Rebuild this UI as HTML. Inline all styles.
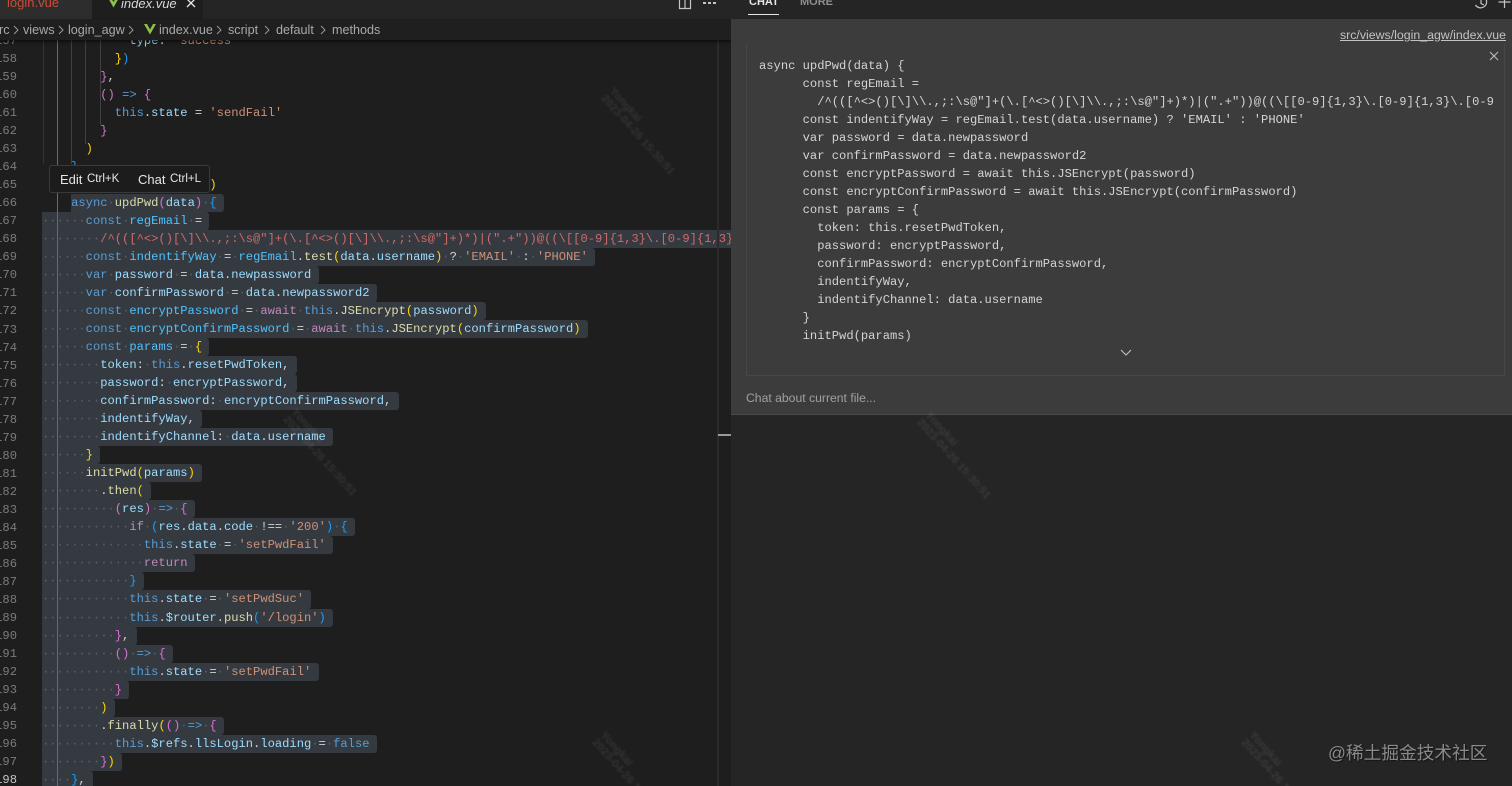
<!DOCTYPE html>
<html><head><meta charset="utf-8">
<style>
html,body{margin:0;padding:0;background:#1e1e1e;width:1512px;height:786px;overflow:hidden}
#r{position:relative;width:1512px;height:786px;overflow:hidden;background:#1e1e1e;font-family:"Liberation Sans",sans-serif}
.a{position:absolute}
#nums,#code{font:12.13px/18.03px "Liberation Mono",monospace}
#nums{left:-5px;top:32px;color:#7b7b7b;width:22px;text-align:right;white-space:pre}
#nums b{color:#c6c6c6;font-weight:400}
#code{left:42px;top:32px;width:689px;height:754px;overflow:hidden;color:#d4d4d4}
#code div{height:18.03px;white-space:pre}
#code .x{display:inline-block;height:18.03px;background:#353a40;padding-right:7.3px;border-radius:0 3px 3px 0;vertical-align:top}
i{font-style:normal;color:#5a6066}
.k{color:#569cd6}.f{color:#dcdcaa}.v{color:#9cdcfe}.c{color:#4fc1ff}.s{color:#ce9178}.r{color:#d16969}
.g{color:#ffd700}.p{color:#da70d6}.b{color:#179fff}.m{color:#c586c0}
.gd{position:absolute;width:1px;background:#404040}
#p{left:731px;top:19px;width:781px;height:396px;background:#3c3c3c}
#pc{font:12.13px/18px "Liberation Mono",monospace;white-space:pre;color:#d4d4d4;left:759px;top:57px;width:735px;height:300px;overflow:hidden}
.wm{position:absolute;transform-origin:0 0;transform:rotate(48deg);font:bold 11px/11px "Liberation Sans",sans-serif;color:rgba(255,255,255,.085);white-space:pre;filter:blur(.7px)}
.bc{position:absolute;top:6px}
</style></head><body><div id="r">

<div class="gd" style="left:43px;top:40px;height:124px;background:#333"></div>
<div class="gd" style="left:71px;top:40px;height:124px"></div>
<div class="gd" style="left:85px;top:40px;height:104px"></div>
<div class="gd" style="left:100px;top:40px;height:85px"></div>

<div id="nums" class="a">157
158
159
160
161
162
163
164
165
166
167
168
169
170
171
172
173
174
175
176
177
178
179
180
181
182
183
184
185
186
187
188
189
190
191
192
193
194
195
196
197
<b>198</b></div>

<div id="code" class="a">
<div>            <span class="v">type</span>: <span class="s">'success'</span></div>
<div>          <span class="g">}</span><span class="b">)</span></div>
<div>        <span class="p">}</span>,</div>
<div>        <span class="p">()</span> <span class="k">=&gt;</span> <span class="p">{</span></div>
<div>          <span class="k">this</span>.<span class="v">state</span> = <span class="s">'sendFail'</span></div>
<div>        <span class="p">}</span></div>
<div>      <span class="g">)</span></div>
<div>    <span class="b">}</span>,</div>
<div>                       <span class="g">)</span></div>
<div>    <span class="x"><span class="k">async</span><i>·</i><span class="f">updPwd</span><span class="p">(</span><span class="v">data</span><span class="p">)</span><i>·</i><span class="b">{</span></span></div>
<div><span class="x"><i>······</i><span class="k">const</span><i>·</i><span class="c">regEmail</span><i>·</i>=</span></div>
<div><span class="x"><i>········</i><span class="r">/^(([^&lt;&gt;()[\]\\.,;:\s@"]+(\.[^&lt;&gt;()[\]\\.,;:\s@"]+)*)|(".+"))@((\[[0-9]{1,3}\.[0-9]{1,3}\.[0-9]{1,3}\.[0-9]{1,3}\])|(([a-zA-Z\-0-9]+\.)+[a-zA-Z]{2,}))$/</span></span></div>
<div><span class="x"><i>······</i><span class="k">const</span><i>·</i><span class="c">indentifyWay</span><i>·</i>=<i>·</i><span class="c">regEmail</span>.<span class="f">test</span><span class="g">(</span><span class="v">data</span>.<span class="v">username</span><span class="g">)</span><i>·</i>?<i>·</i><span class="s">'EMAIL'</span><i>·</i>:<i>·</i><span class="s">'PHONE'</span></span></div>
<div><span class="x"><i>······</i><span class="k">var</span><i>·</i><span class="v">password</span><i>·</i>=<i>·</i><span class="v">data</span>.<span class="v">newpassword</span></span></div>
<div><span class="x"><i>······</i><span class="k">var</span><i>·</i><span class="v">confirmPassword</span><i>·</i>=<i>·</i><span class="v">data</span>.<span class="v">newpassword2</span></span></div>
<div><span class="x"><i>······</i><span class="k">const</span><i>·</i><span class="c">encryptPassword</span><i>·</i>=<i>·</i><span class="m">await</span><i>·</i><span class="k">this</span>.<span class="f">JSEncrypt</span><span class="g">(</span><span class="v">password</span><span class="g">)</span></span></div>
<div><span class="x"><i>······</i><span class="k">const</span><i>·</i><span class="c">encryptConfirmPassword</span><i>·</i>=<i>·</i><span class="m">await</span><i>·</i><span class="k">this</span>.<span class="f">JSEncrypt</span><span class="g">(</span><span class="v">confirmPassword</span><span class="g">)</span></span></div>
<div><span class="x"><i>······</i><span class="k">const</span><i>·</i><span class="c">params</span><i>·</i>=<i>·</i><span class="g">{</span></span></div>
<div><span class="x"><i>········</i><span class="v">token</span>:<i>·</i><span class="k">this</span>.<span class="v">resetPwdToken</span>,</span></div>
<div><span class="x"><i>········</i><span class="v">password</span>:<i>·</i><span class="v">encryptPassword</span>,</span></div>
<div><span class="x"><i>········</i><span class="v">confirmPassword</span>:<i>·</i><span class="v">encryptConfirmPassword</span>,</span></div>
<div><span class="x"><i>········</i><span class="v">indentifyWay</span>,</span></div>
<div><span class="x"><i>········</i><span class="v">indentifyChannel</span>:<i>·</i><span class="v">data</span>.<span class="v">username</span></span></div>
<div><span class="x"><i>······</i><span class="g">}</span></span></div>
<div><span class="x"><i>······</i><span class="f">initPwd</span><span class="g">(</span><span class="v">params</span><span class="g">)</span></span></div>
<div><span class="x"><i>········</i>.<span class="f">then</span><span class="g">(</span></span></div>
<div><span class="x"><i>··········</i><span class="p">(</span><span class="v">res</span><span class="p">)</span><i>·</i><span class="k">=&gt;</span><i>·</i><span class="p">{</span></span></div>
<div><span class="x"><i>············</i><span class="m">if</span><i>·</i><span class="b">(</span><span class="v">res</span>.<span class="v">data</span>.<span class="v">code</span><i>·</i>!==<i>·</i><span class="s">'200'</span><span class="b">)</span><i>·</i><span class="b">{</span></span></div>
<div><span class="x"><i>··············</i><span class="k">this</span>.<span class="v">state</span><i>·</i>=<i>·</i><span class="s">'setPwdFail'</span></span></div>
<div><span class="x"><i>··············</i><span class="m">return</span></span></div>
<div><span class="x"><i>············</i><span class="b">}</span></span></div>
<div><span class="x"><i>············</i><span class="k">this</span>.<span class="v">state</span><i>·</i>=<i>·</i><span class="s">'setPwdSuc'</span></span></div>
<div><span class="x"><i>············</i><span class="k">this</span>.<span class="v">$router</span>.<span class="f">push</span><span class="b">(</span><span class="s">'/login'</span><span class="b">)</span></span></div>
<div><span class="x"><i>··········</i><span class="p">}</span>,</span></div>
<div><span class="x"><i>··········</i><span class="p">()</span><i>·</i><span class="k">=&gt;</span><i>·</i><span class="p">{</span></span></div>
<div><span class="x"><i>············</i><span class="k">this</span>.<span class="v">state</span><i>·</i>=<i>·</i><span class="s">'setPwdFail'</span></span></div>
<div><span class="x"><i>··········</i><span class="p">}</span></span></div>
<div><span class="x"><i>········</i><span class="g">)</span></span></div>
<div><span class="x"><i>········</i>.<span class="f">finally</span><span class="g">(</span><span class="p">()</span><i>·</i><span class="k">=&gt;</span><i>·</i><span class="p">{</span></span></div>
<div><span class="x"><i>··········</i><span class="k">this</span>.<span class="v">$refs</span>.<span class="v">llsLogin</span>.<span class="v">loading</span><i>·</i>=<i>·</i><span class="k">false</span></span></div>
<div><span class="x"><i>········</i><span class="p">}</span><span class="g">)</span></span></div>
<div><span class="x"><i>····</i><span class="b">}</span>,</span></div>
</div>
<div class="gd" style="left:57px;top:40px;height:746px;background:#6a6a6a"></div>

<!-- scrollbar / minimap edge -->
<div class="a" style="left:717px;top:40px;width:2px;height:746px;background:#2b2b2b"></div>
<div class="a" style="left:718px;top:434px;width:13px;height:2px;background:#9a9a9a"></div>

<!-- tabs -->
<div class="a" style="left:0;top:0;width:731px;height:19px;background:#252526"></div>
<div class="a" style="left:0;top:0;width:92px;height:19px;background:#2d2d2d;overflow:hidden"><span class="a" style="left:7px;top:-5px;font-size:13px;line-height:16px;color:#c74e39;white-space:nowrap">login.vue</span></div>
<div class="a" style="left:92px;top:0;width:111px;height:19px;background:#1e1e1e;overflow:hidden">
<svg class="a" style="left:15px;top:-4px" width="13" height="12" viewBox="0 0 13 12"><path d="M0 0L6.5 11.5L13 0H10L6.5 6L3 0Z" fill="#8dc149"/></svg>
<span class="a" style="left:29px;top:-4px;font-size:13px;line-height:16px;color:#d8d8d8;font-style:italic;white-space:nowrap">index.vue</span>
<svg class="a" style="left:94px;top:-2px" width="10" height="10" viewBox="0 0 10 10"><path d="M1 1L9 9M9 1L1 9" stroke="#e8e8e8" stroke-width="1.3"/></svg>
</div>
<svg class="a" style="left:678px;top:-3px" width="14" height="13" viewBox="0 0 14 13"><path d="M1.5 0V11.5H12.5V0M7 0V11.5" fill="none" stroke="#c5c5c5" stroke-width="1.2"/></svg>
<div class="a" style="left:703px;top:2px;width:3px;height:2px;background:#c5c5c5;box-shadow:5px 0 0 #c5c5c5,10px 0 0 #c5c5c5"></div>

<!-- breadcrumb -->
<div class="a" style="left:0;top:19px;width:731px;height:21px;background:#1f1f1f;box-shadow:0 2px 3px rgba(0,0,0,.55);font-size:12.6px;line-height:23px;color:#a9a9a9;white-space:nowrap"><span class="a" style="left:-1px">rc</span><svg class="bc" style="left:13px" width="6" height="10" viewBox="0 0 6 10"><path d="M1 1L5 5L1 9" fill="none" stroke="#999" stroke-width="1"/></svg><span class="a" style="left:23px">views</span><svg class="bc" style="left:58px" width="6" height="10" viewBox="0 0 6 10"><path d="M1 1L5 5L1 9" fill="none" stroke="#999" stroke-width="1"/></svg><span class="a" style="left:68px">login_agw</span><svg class="bc" style="left:128px" width="6" height="10" viewBox="0 0 6 10"><path d="M1 1L5 5L1 9" fill="none" stroke="#999" stroke-width="1"/></svg><svg class="a" style="left:144px;top:5px" width="12" height="11" viewBox="0 0 12 11"><path d="M0 0L6 10.5L12 0H9L6 5.5L3 0Z" fill="#8dc149"/></svg><span class="a" style="left:159px">index.vue</span><svg class="bc" style="left:216px" width="6" height="10" viewBox="0 0 6 10"><path d="M1 1L5 5L1 9" fill="none" stroke="#999" stroke-width="1"/></svg><span class="a" style="left:228px">script</span><svg class="bc" style="left:264px" width="6" height="10" viewBox="0 0 6 10"><path d="M1 1L5 5L1 9" fill="none" stroke="#999" stroke-width="1"/></svg><span class="a" style="left:276px">default</span><svg class="bc" style="left:320px" width="6" height="10" viewBox="0 0 6 10"><path d="M1 1L5 5L1 9" fill="none" stroke="#999" stroke-width="1"/></svg><span class="a" style="left:332px">methods</span></div>

<!-- popup -->
<div class="a" style="left:49px;top:165px;width:161px;height:28px;background:#1c1c1c;border:1px solid #3a3a3a;border-radius:3px;box-sizing:border-box;color:#e6e6e6;white-space:nowrap;z-index:5">
<span class="a" style="left:10px;top:6px;font-size:13px;line-height:16px">Edit</span>
<span class="a" style="left:37px;top:6px;font-size:11.5px;line-height:15px">Ctrl+K</span>
<span class="a" style="left:88px;top:6px;font-size:13px;line-height:16px">Chat</span>
<span class="a" style="left:120px;top:6px;font-size:11.5px;line-height:15px">Ctrl+L</span>
</div>

<!-- right side -->
<div class="a" style="left:731px;top:0;width:781px;height:786px;background:#252526"></div>
<span class="a" style="left:749px;top:-5px;font-size:11px;line-height:14px;font-weight:bold;color:#e7e7e7">CHAT</span>
<div class="a" style="left:748px;top:14px;width:31px;height:1px;background:#e7e7e7"></div>
<span class="a" style="left:800px;top:-5px;font-size:11px;line-height:14px;font-weight:bold;color:#8f8f8f">MORE</span>
<svg class="a" style="left:1473px;top:-5px" width="16" height="16" viewBox="0 0 16 16"><path d="M3 3A6 6 0 1 1 2.5 10M8 4V8.5L11 10" fill="none" stroke="#c5c5c5" stroke-width="1.2"/></svg>
<svg class="a" style="left:1498px;top:-4px" width="13" height="13" viewBox="0 0 13 13"><path d="M6.5 0V12M0.5 6H12.5" stroke="#c5c5c5" stroke-width="1.2"/></svg>

<div id="p" class="a"></div>
<div class="a" style="left:731px;top:414px;width:781px;height:1px;background:#4a4a4a"></div>
<div class="a" style="left:746px;top:44px;width:759px;height:332px;box-sizing:border-box;border-left:1px solid #474747;border-bottom:1px solid #474747;border-right:1px solid #474747"></div>
<span class="a" style="right:6px;top:28px;font-size:12.35px;line-height:15px;color:#c2c2c2;text-decoration:underline;white-space:nowrap">src/views/login_agw/index.vue</span>
<svg class="a" style="left:1489px;top:51px" width="10" height="10" viewBox="0 0 10 10"><path d="M1 1L9 9M9 1L1 9" stroke="#bdbdbd" stroke-width="1.1"/></svg>
<div id="pc" class="a">async updPwd(data) {
      const regEmail =
        /^(([^&lt;&gt;()[\]\\.,;:\s@"]+(\.[^&lt;&gt;()[\]\\.,;:\s@"]+)*)|(".+"))@((\[[0-9]{1,3}\.[0-9]{1,3}\.[0-9]{1,3}\.[0-9]{1,3}\])
      const indentifyWay = regEmail.test(data.username) ? 'EMAIL' : 'PHONE'
      var password = data.newpassword
      var confirmPassword = data.newpassword2
      const encryptPassword = await this.JSEncrypt(password)
      const encryptConfirmPassword = await this.JSEncrypt(confirmPassword)
      const params = {
        token: this.resetPwdToken,
        password: encryptPassword,
        confirmPassword: encryptConfirmPassword,
        indentifyWay,
        indentifyChannel: data.username
      }
      initPwd(params)</div>
<svg class="a" style="left:1120px;top:349px" width="12" height="7" viewBox="0 0 12 7"><path d="M1 1L6 6L11 1" fill="none" stroke="#c5c5c5" stroke-width="1.1"/></svg>
<span class="a" style="left:746px;top:390px;font-size:12.2px;line-height:16px;color:#a0a0a0">Chat about current file...</span>

<!-- watermarks -->
<div class="wm" style="left:615px;top:86px">Yongkai
2023-04-26 15:30:51</div>
<div class="wm" style="left:297px;top:407px">Yongkai
2023-04-26 15:30:51</div>
<div class="wm" style="left:931px;top:410px">Yongkai
2023-04-26 15:30:51</div>
<div class="wm" style="left:606px;top:730px">Yongkai
2023-04-26 15:30:51</div>
<div class="wm" style="left:1255px;top:730px">Yongkai
2023-04-26 15:30:51</div>

<div class="a" style="left:1328px;top:741px;font:17.7px/24px 'Liberation Sans','Noto Sans CJK SC',sans-serif;color:#8a8a8a;white-space:nowrap;text-shadow:1px 1px 1px rgba(0,0,0,.5)">@稀土掘金技术社区</div>
</div></body></html>
